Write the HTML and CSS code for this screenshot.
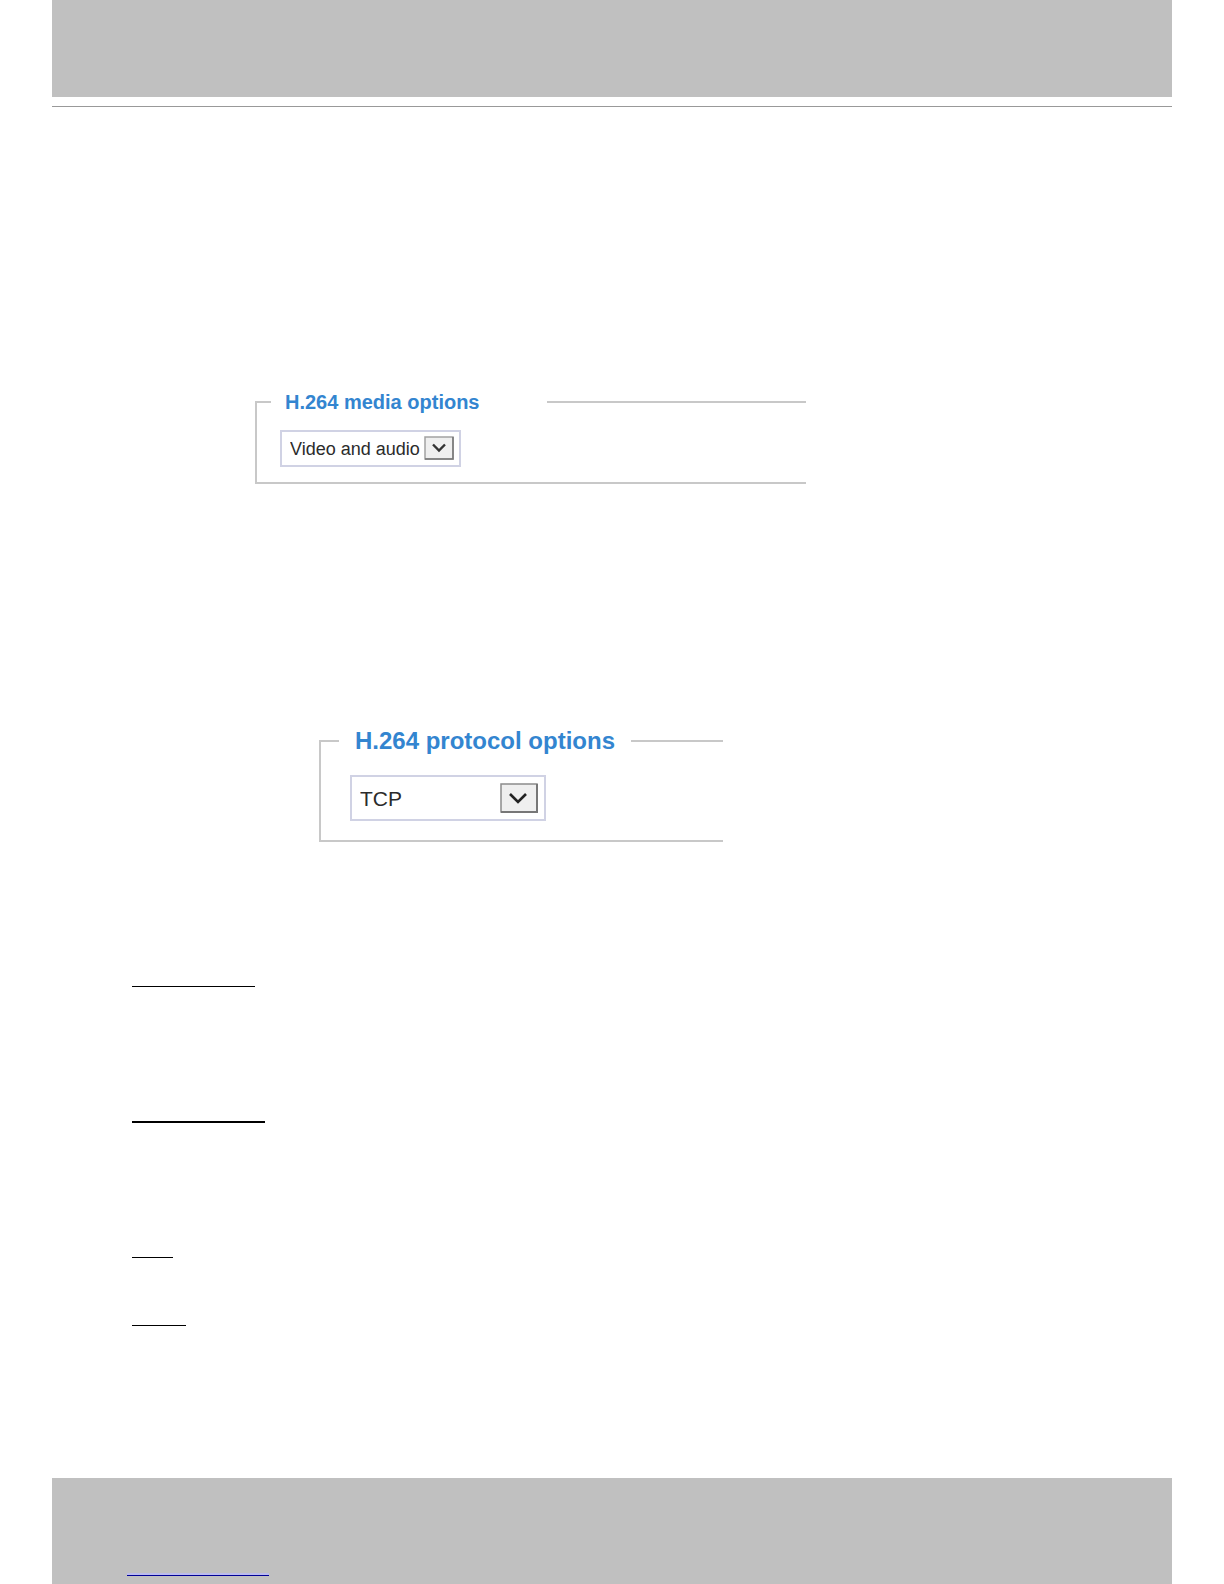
FILE: index.html
```html
<!DOCTYPE html>
<html lang="en">
<head>
    <meta charset="utf-8" />
    <title>H.264 options</title>
    <link rel="stylesheet" href="styles.css">
</head>
<body>
    <header></header>
    <main>
        <fieldset class="media">
            <legend id="media-label">H.264 media options</legend>
            <div class="dropdown">
                <select aria-labelledby="media-label">
                    <option>Video and audio</option>
                </select>
                <svg class="arrow" viewBox="0 0 30 24" aria-hidden="true">
                    <rect x="1" y="1" width="28" height="22" fill="#efefef" stroke="#a2a2a2" stroke-width="1.5"/>
                    <path d="M1 23H29V1" fill="none" stroke="#777" stroke-width="1.5"/>
                    <path d="M9 8.5L15 14.5L21 8.5" fill="none" stroke="#333" stroke-width="2.4"/>
                </svg>
            </div>
        </fieldset>
        <fieldset class="protocol">
            <legend id="protocol-label">H.264 protocol options</legend>
            <div class="dropdown">
                <select aria-labelledby="protocol-label">
                    <option>TCP</option>
                </select>
                <svg class="arrow" viewBox="0 0 38 30" aria-hidden="true">
                    <rect x="1" y="1" width="36" height="28" fill="#efefef" stroke="#8c8c8c" stroke-width="1.5"/>
                    <path d="M1 29H37V1" fill="none" stroke="#777" stroke-width="2"/>
                    <path d="M10 11L18 19L26 11" fill="none" stroke="#222" stroke-width="2.6"/>
                </svg>
            </div>
        </fieldset>
        <div class="rules">
            <div class="rule unicast"></div>
            <div class="rule multicast"></div>
            <div class="rule tcp"></div>
            <div class="rule http"></div>
        </div>
    </main>
    <footer>
        <a href="#" aria-label="Website"></a>
    </footer>
</body>
</html>
```

FILE: styles.css
```css
* {
    box-sizing: border-box;
}
body {
    margin: 0;
    padding: 0 52px;
    min-height: 100vh;
    display: flex;
    flex-direction: column;
    background: #fff;
    font-family: "Liberation Sans", Arial, sans-serif;
}
header {
    height: 97px;
    background: #c0c0c0;
}
main {
    flex: 1;
    margin-top: 9px;
    padding: 283px 80px 0;
    border-top: 1px solid #999;
}
fieldset {
    margin: 0;
    border: 2px solid #c8c8c8;
    border-right: none;
}
legend {
    color: #3385d0;
    font-weight: bold;
}
.dropdown {
    position: relative;
}
select {
    appearance: none;
    display: block;
    width: 100%;
    height: 100%;
    margin: 0;
    padding: 0 8px;
    border: 2px solid #d0d2e4;
    border-radius: 0;
    background: #fff;
    color: #2b2b2b;
    font-family: inherit;
    font-size: inherit;
}
.arrow {
    position: absolute;
    pointer-events: none;
}

.media {
    max-width: 551px;
    margin-left: 123px;
    padding: 16px 0 15px 14px;
}
.media legend {
    width: 276px;
    padding: 0 14px;
    font-size: 20px;
    line-height: 24px;
}
.media .dropdown {
    width: 181px;
    height: 37px;
    margin-left: 9px;
    font-size: 18px;
}
.media .arrow {
    top: 6px;
    right: 7px;
    width: 30px;
    height: 24px;
}

.protocol {
    max-width: 404px;
    margin: 242px 0 0 187px;
    padding: 19px 0 19px 18px;
}
.protocol legend {
    padding: 0 16px;
    font-size: 24px;
    line-height: 30px;
}
.protocol .dropdown {
    width: 196px;
    height: 46px;
    margin-left: 11px;
    font-size: 21px;
}
.protocol .arrow {
    top: 8px;
    right: 8px;
    width: 38px;
    height: 30px;
}

.rules {
    padding: 77px 0;
}
.rule {
    height: 68px;
    border-bottom: 1px solid #000;
}
.unicast {
    width: 123px;
}
.multicast {
    width: 133px;
    height: 136px;
    border-bottom-width: 2px;
}
.tcp {
    width: 41px;
    height: 135px;
}
.http {
    width: 54px;
}

footer {
    height: 106px;
    padding: 95px 75px 0;
    background: #c0c0c0;
}
footer a {
    display: block;
    width: 142px;
    height: 3px;
    background: #bbbbec;
    border-bottom: 1px solid #000096;
}
```
